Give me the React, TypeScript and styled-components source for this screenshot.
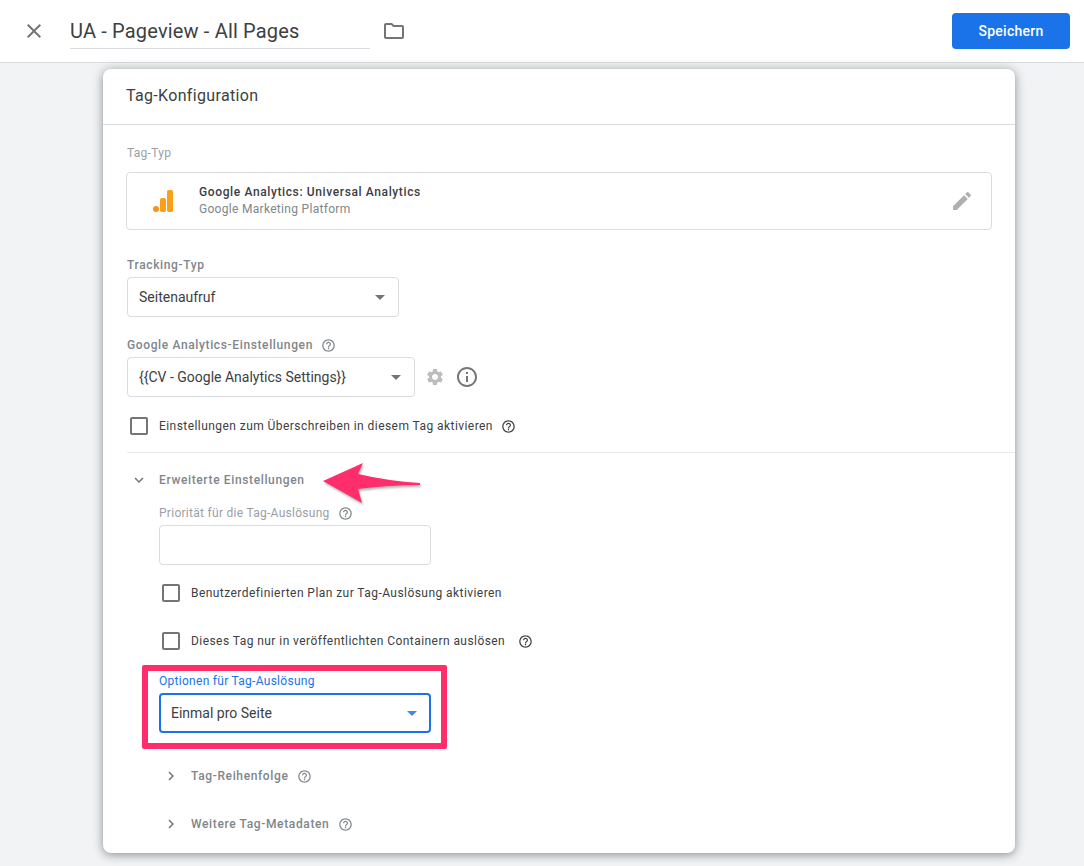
import React, { FC } from "react";
import styled, { createGlobalStyle } from "styled-components";
import { MdClose, MdEdit, MdExpandMore, MdChevronRight, MdHelpOutline, MdInfoOutline, MdOutlineFolder, MdSettings } from "react-icons/md";

const GlobalStyle = createGlobalStyle`
    html, body {
        margin: 0;
        height: 100%;
        overflow: hidden;
        background: #f1f3f4;
        font-family: Roboto, "Liberation Sans", sans-serif;
    }
`;

const Page = styled.div`
    display: flex;
    flex-direction: column;
    height: 866px;
    overflow: hidden;
`;

const TopBar = styled.header`
    display: flex;
    align-items: center;
    flex: none;
    height: 62px;
    padding: 0 14px 0 22px;
    background: #fff;
    border-bottom: 1px solid #dadce0;
`;

const CloseButton = styled.span`
    display: flex;
    width: 24px;
    color: #757575;
    font-size: 24px;
`;

const NameField = styled.div`
    width: 300px;
    height: 36px;
    margin: 0 12px 0 24px;
    box-sizing: border-box;
    padding-top: 5px;
    border-bottom: 1px solid #dadce0;
    color: #3c4043;
    font-size: 20px;
    letter-spacing: 0.17px;
    line-height: 26px;
`;

const FolderIcon = styled.span`
    display: flex;
    color: #757575;
    font-size: 24px;
`;

const SaveButton = styled.button`
    width: 118px;
    height: 36px;
    margin-left: auto;
    border: 0;
    border-radius: 4px;
    background: #1a73e8;
    color: #fff;
    font: 500 14px Roboto, "Liberation Sans", sans-serif;
    letter-spacing: 0.25px;
`;

const Card = styled.main`
    position: relative;
    width: 912px;
    height: 784px;
    margin: 6px 0 0 103px;
    border-radius: 8px;
    background: #fff;
    box-shadow: 0 2px 8px rgba(60, 64, 67, 0.45), 0 0 14px rgba(60, 64, 67, 0.15);
`;

const CardTitle = styled.h2`
    height: 56px;
    margin: 0;
    padding: 17px 0 0 23px;
    box-sizing: border-box;
    border-bottom: 1px solid #dadce0;
    color: #3c4043;
    font-size: 16px;
    font-weight: 400;
    letter-spacing: 0.33px;
    line-height: 20px;
`;

const Body = styled.div`
    padding: 20px 0 0 24px;
`;

const Label = styled.div<{ $muted?: boolean; $active?: boolean }>`
    display: flex;
    align-items: center;
    gap: 8px;
    height: 16px;
    color: ${props => (props.$active ? "#1a73e8" : props.$muted ? "#9aa0a6" : "#80868b")};
    font-size: 12px;
    font-weight: ${props => (props.$muted || props.$active ? 400 : 500)};
    letter-spacing: ${props => (props.$muted || props.$active ? "0.28px" : "0.63px")};
    line-height: 16px;
`;

const TagTypeBox = styled.div`
    display: flex;
    align-items: center;
    width: 866px;
    height: 58px;
    margin: 11px 0 27px -1px;
    box-sizing: border-box;
    padding: 0 17px 0 24px;
    border: 1px solid #dadce0;
    border-radius: 4px;
`;

const TagTypeText = styled.div`
    margin-left: 24px;
    flex: 1;
`;

const TagTypeName = styled.div`
    color: #3c4043;
    font-size: 12px;
    font-weight: 500;
    letter-spacing: 0.62px;
    line-height: 17px;
`;

const TagTypeVendor = styled.div`
    color: #80868b;
    font-size: 12px;
    letter-spacing: 0.3px;
    line-height: 17px;
`;

const EditIcon = styled.span`
    display: flex;
    color: #b0b0b0;
    font-size: 24px;
`;

const Select = styled.div<{ $width: number; $focused?: boolean }>`
    display: flex;
    align-items: center;
    justify-content: space-between;
    width: ${props => props.$width}px;
    height: 40px;
    box-sizing: border-box;
    padding: ${props => (props.$focused ? "0 12px 0 10px" : "0 13px 0 11px")};
    border: ${props => (props.$focused ? "2px solid #1a73e8" : "1px solid #dadce0")};
    border-radius: 4px;
    background: #fff;
    color: #3c4043;
    font-size: 14px;

    &::after {
        content: "";
        border: 5px solid transparent;
        border-top-color: ${props => (props.$focused ? "#4285f4" : "#757575")};
        border-bottom-width: 0;
    }
`;

const TextInput = styled.div`
    width: 272px;
    height: 40px;
    box-sizing: border-box;
    border: 1px solid #dadce0;
    border-radius: 4px;
`;

const FieldLabelGap = styled.div<{ $top: number; $bottom: number }>`
    margin: ${props => props.$top}px 0 ${props => props.$bottom}px;
`;

const SelectRow = styled.div`
    display: flex;
    align-items: center;
`;

const SettingsIcon = styled.span`
    display: flex;
    margin-left: 10px;
    color: #bdbdbd;
    font-size: 20px;
`;

const InfoIcon = styled.span`
    display: flex;
    margin-left: 10px;
    color: #757575;
    font-size: 24px;
`;

const CheckRow = styled.div<{ $top: number }>`
    display: flex;
    align-items: center;
    height: 20px;
    margin-top: ${props => props.$top}px;
    padding-left: 3px;
    color: #3c4043;
    font-size: 12px;
    letter-spacing: 0.44px;
`;

const CheckBox = styled.span`
    flex: none;
    width: 18px;
    height: 18px;
    margin-right: 11px;
    box-sizing: border-box;
    border: 2px solid #757575;
    border-radius: 2px;
`;

const HelpDark = styled.span<{ $gap: number }>`
    display: flex;
    margin-left: ${props => props.$gap}px;
    color: #3c4043;
    font-size: 15px;
`;

const HelpGrey = styled.span`
    display: flex;
    color: #80868b;
    font-size: 15px;
`;

const Divider = styled.hr`
    height: 1px;
    margin: 16px 0 0;
    border: 0;
    background: #e8eaed;
`;

const AdvancedHead = styled.div`
    position: relative;
    display: flex;
    align-items: center;
    height: 20px;
    margin-top: 17px;
    color: #80868b;
    font-size: 12px;
    font-weight: 500;
    letter-spacing: 0.63px;
`;

const ToggleIcon = styled.span`
    display: flex;
    width: 32px;
    padding-left: 3px;
    box-sizing: border-box;
    color: #757575;
    font-size: 18px;
`;

const Arrow = styled.svg`
    position: absolute;
    left: 195px;
    top: -16px;
    width: 100px;
    height: 52px;
    overflow: visible;
    filter: drop-shadow(1px 2px 1px rgba(0, 0, 0, 0.3));
`;

const Advanced = styled.div`
    padding: 15px 0 0 32px;
`;

const FiringField = styled.div`
    position: relative;
    margin-top: 22px;

    &::before {
        content: "";
        position: absolute;
        left: -17px;
        top: -8px;
        width: 305px;
        height: 84px;
        box-sizing: border-box;
        border: 6.5px solid #ff2d6b;
        border-radius: 2px;
    }
`;

const SubSection = styled.div<{ $top: number }>`
    display: flex;
    align-items: center;
    height: 20px;
    margin-top: ${props => props.$top}px;
    color: #80868b;
    font-size: 12px;
    font-weight: 500;
    letter-spacing: 0.63px;
`;

const SubLabel = styled.span`
    margin-right: 9px;
`;

const AnalyticsLogo: FC = () => (
    <svg width="24" height="24" viewBox="0 0 24 24">
        <rect x="16" y="1" width="6" height="22" rx="1.8" fill="#f9a01b" />
        <rect x="9" y="9" width="6" height="14" rx="1.8" fill="#f9a01b" />
        <circle cx="5" cy="20" r="3" fill="#f5921e" />
    </svg>
);

const App: FC = () => (
    <Page>
        <GlobalStyle />
        <TopBar>
            <CloseButton><MdClose /></CloseButton>
            <NameField>UA - Pageview - All Pages</NameField>
            <FolderIcon><MdOutlineFolder /></FolderIcon>
            <SaveButton>Speichern</SaveButton>
        </TopBar>
        <Card>
            <CardTitle>Tag-Konfiguration</CardTitle>
            <Body>
                <Label $muted>Tag-Typ</Label>
                <TagTypeBox>
                    <AnalyticsLogo />
                    <TagTypeText>
                        <TagTypeName>Google Analytics: Universal Analytics</TagTypeName>
                        <TagTypeVendor>Google Marketing Platform</TagTypeVendor>
                    </TagTypeText>
                    <EditIcon><MdEdit /></EditIcon>
                </TagTypeBox>
                <Label>Tracking-Typ</Label>
                <FieldLabelGap $top={4} $bottom={20}>
                    <Select $width={272}>Seitenaufruf</Select>
                </FieldLabelGap>
                <Label>Google Analytics-Einstellungen <HelpGrey><MdHelpOutline /></HelpGrey></Label>
                <FieldLabelGap $top={4} $bottom={0}>
                    <SelectRow>
                        <Select $width={288}>{"{{CV - Google Analytics Settings}}"}</Select>
                        <SettingsIcon><MdSettings /></SettingsIcon>
                        <InfoIcon><MdInfoOutline /></InfoIcon>
                    </SelectRow>
                </FieldLabelGap>
                <CheckRow $top={19}>
                    <CheckBox />
                    Einstellungen zum Überschreiben in diesem Tag aktivieren
                    <HelpDark $gap={8}><MdHelpOutline /></HelpDark>
                </CheckRow>
                <Divider />
                <AdvancedHead>
                    <ToggleIcon><MdExpandMore /></ToggleIcon>
                    Erweiterte Einstellungen
                    <Arrow viewBox="0 0 100 52">
                        <path d="M1 27 L41 9 L36 20 Q66 27 98 29 L98 31 Q66 31 36 35 L40 49 Z" fill="#ff2d6b" />
                    </Arrow>
                </AdvancedHead>
                <Advanced>
                    <Label $muted>Priorität für die Tag-Auslösung <HelpGrey><MdHelpOutline /></HelpGrey></Label>
                    <FieldLabelGap $top={4} $bottom={0}>
                        <TextInput />
                    </FieldLabelGap>
                    <CheckRow $top={18}>
                        <CheckBox />
                        Benutzerdefinierten Plan zur Tag-Auslösung aktivieren
                    </CheckRow>
                    <CheckRow $top={28}>
                        <CheckBox />
                        Dieses Tag nur in veröffentlichten Containern auslösen
                        <HelpDark $gap={13}><MdHelpOutline /></HelpDark>
                    </CheckRow>
                    <FiringField>
                        <Label $active>Optionen für Tag-Auslösung</Label>
                        <FieldLabelGap $top={4} $bottom={0}>
                            <Select $width={272} $focused>Einmal pro Seite</Select>
                        </FieldLabelGap>
                    </FiringField>
                    <SubSection $top={33}>
                        <ToggleIcon><MdChevronRight /></ToggleIcon>
                        <SubLabel>Tag-Reihenfolge</SubLabel>
                        <HelpGrey><MdHelpOutline /></HelpGrey>
                    </SubSection>
                    <SubSection $top={28}>
                        <ToggleIcon><MdChevronRight /></ToggleIcon>
                        <SubLabel>Weitere Tag-Metadaten</SubLabel>
                        <HelpGrey><MdHelpOutline /></HelpGrey>
                    </SubSection>
                </Advanced>
            </Body>
        </Card>
    </Page>
);

export default App;
